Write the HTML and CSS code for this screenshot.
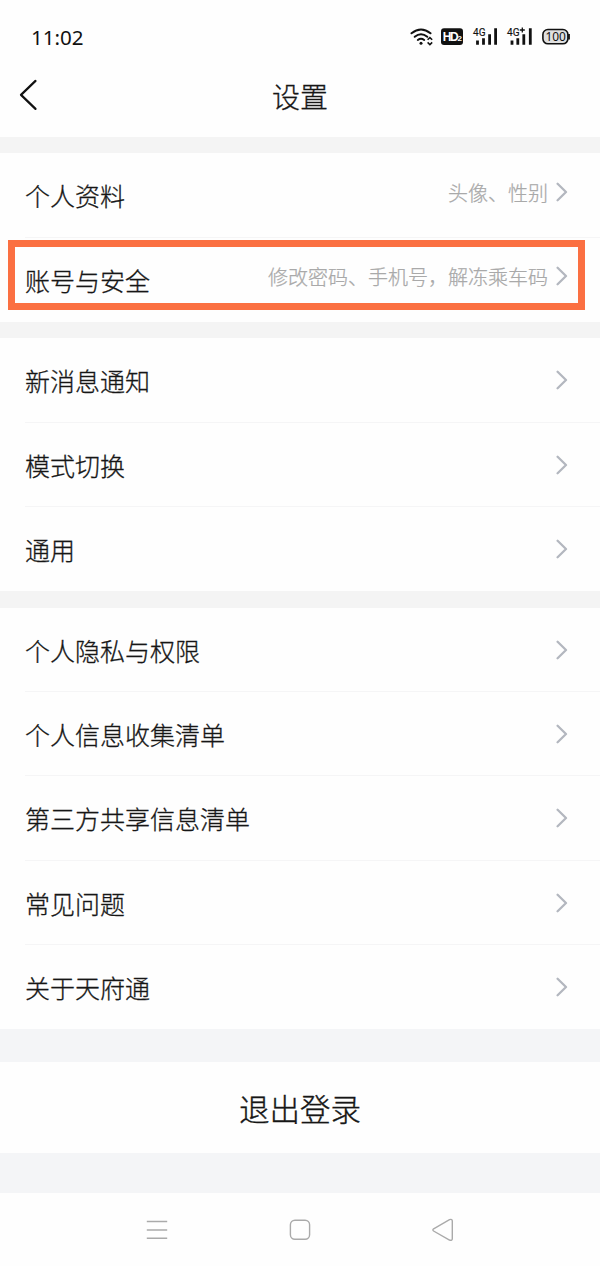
FILE: index.html
```html
<!DOCTYPE html>
<html lang="zh-CN">
<head>
<meta charset="utf-8">
<title>设置</title>
<link rel="stylesheet" href="styles.css">
</head>
<body>
<svg class="defs" width="0" height="0" aria-hidden="true">
  <symbol id="chevron" viewBox="0 0 12 20"><path d="M1.6 1.8 10 10 1.6 18.2" fill="none" stroke="#b3b7bf" stroke-width="2.3" stroke-linecap="round" stroke-linejoin="round"/></symbol>
</svg>
<main class="screen">
  <div class="status">
    <time class="clock">11:02</time>
    <svg class="signals" width="162" height="24" viewBox="0 0 162 24">
      <g fill="none" stroke="#111" stroke-width="2" stroke-linecap="round">
        <path d="M1.500 8.300Q11 .7 20.500 8.300"/>
        <path d="M4.700 11.800Q11 6.600 17.300 11.800"/>
        <path d="M7.800 15Q11 12.600 14.200 15"/>
      </g>
      <circle cx="11" cy="18.300" r="1.500" fill="#111"/>
      <path d="M17.600 14.800 19.900 12.600 22.200 14.800M17.600 17.400 19.900 19.600 22.200 17.400" fill="none" stroke="#111" stroke-width="1.500"/>
      <rect x="31" y="3.300" width="22" height="16.700" rx="3" fill="#111"/>
      <text x="32.800" y="16" class="hd">HD<tspan class="hd-num" dx=".3">2</tspan></text>
      <text x="63" y="11.400" class="net" textLength="12.500" lengthAdjust="spacingAndGlyphs">4G</text>
      <path d="M67.500 15.500v4.300M73.500 13.300v6.500M79.600 9.300v10.500M85.600 3.300v16.500" class="bars"/>
      <text x="97" y="11.400" class="net" textLength="12.500" lengthAdjust="spacingAndGlyphs">4G</text>
      <path d="M109.800 5h5M112.300 2.500v5" stroke="#111" stroke-width="1.300"/>
      <path d="M102 15.500v4.300M107.800 13.300v6.500M113.800 9.300v10.500M120.300 3.300v16.500" class="bars"/>
      <rect x="132.900" y="4.500" width="25" height="14.300" rx="5" fill="#e0e0e0" stroke="#111" stroke-width="1.600"/>
      <path d="M159 9v5.500" stroke="#111" stroke-width="1.800"/>
      <text x="135.400" y="16.200" class="level" textLength="20.500" lengthAdjust="spacingAndGlyphs">100</text>
    </svg>
  </div>
  <header class="header">
    <svg class="back" width="20" height="32" viewBox="0 0 20 32"><path d="M17.500 1.900 3 15.900 17.500 29.900" fill="none" stroke="#111" stroke-width="2.200" stroke-linecap="round" stroke-linejoin="round"/></svg>
    <h1 class="title">设置</h1>
  </header>
  <section class="group">
    <div class="row row-detail"><span class="label">个人资料</span><span class="detail">头像、性别</span><svg class="arrow"><use href="#chevron"/></svg></div>
    <div class="row row-detail"><span class="label">账号与安全</span><span class="detail">修改密码、手机号，解冻乘车码</span><svg class="arrow"><use href="#chevron"/></svg><div class="highlight"></div></div>
  </section>
  <section class="group">
    <div class="row"><span class="label">新消息通知</span><svg class="arrow"><use href="#chevron"/></svg></div>
    <div class="row"><span class="label">模式切换</span><svg class="arrow"><use href="#chevron"/></svg></div>
    <div class="row"><span class="label">通用</span><svg class="arrow"><use href="#chevron"/></svg></div>
  </section>
  <section class="group">
    <div class="row"><span class="label">个人隐私与权限</span><svg class="arrow"><use href="#chevron"/></svg></div>
    <div class="row"><span class="label">个人信息收集清单</span><svg class="arrow"><use href="#chevron"/></svg></div>
    <div class="row"><span class="label">第三方共享信息清单</span><svg class="arrow"><use href="#chevron"/></svg></div>
    <div class="row"><span class="label">常见问题</span><svg class="arrow"><use href="#chevron"/></svg></div>
    <div class="row"><span class="label">关于天府通</span><svg class="arrow"><use href="#chevron"/></svg></div>
  </section>
  <div class="footer">
    <div class="logout">退出登录</div>
  </div>
  <nav class="nav">
    <svg width="22" height="24" viewBox="0 0 22 24"><path d="M.8 3.500h20.400M.8 12h20.400M.8 20.300h20.400" stroke="#aaa" stroke-width="1.500"/></svg>
    <svg width="22" height="24" viewBox="0 0 22 24"><rect x="1.400" y="2.300" width="19.200" height="19" rx="4.500" fill="none" stroke="#aaa" stroke-width="1.400"/></svg>
    <svg width="22" height="24" viewBox="0 0 22 24"><path d="M1.600 10.800 17.500 1.700Q20.300.700 20.300 3V20.500Q20.300 23.200 17.500 22L1.600 13Q.200 11.900 1.600 10.800Z" fill="none" stroke="#aaa" stroke-width="1.400"/></svg>
  </nav>
</main>
</body>
</html>
```
FILE: styles.css
```css
* { box-sizing: border-box; }
body {
  margin: 0;
  background: #fefefe;
  color: #161616;
  font-family: "Noto Sans CJK SC", sans-serif;
  font-weight: 300;
}
.defs { display: block; }
.screen {
  width: 600px;
  height: 1266px;
  display: flex;
  flex-direction: column;
  overflow: hidden;
}
.status {
  height: 60px;
  flex: none;
  display: flex;
  justify-content: space-between;
  padding: 25px 28px 0 31px;
}
.clock {
  font: 400 20.6px/24px "Noto Sans", sans-serif;
  color: #111;
}
.hd { font: 700 12px "Liberation Sans", sans-serif; fill: #fff; letter-spacing: -1.5px; }
.hd-num { font-size: 8px; letter-spacing: 0; }
.net { font: 400 10.8px Roboto, sans-serif; fill: #111; stroke: #111; stroke-width: .15px; }
.level { font: 400 13px "Noto Sans", sans-serif; fill: #111; }
.bars { stroke: #111; stroke-width: 2.8; fill: none; }
.header {
  height: 76.8px;
  flex: none;
  display: grid;
  grid-template-columns: 40px 1fr 40px;
  padding: 0 18px;
}
.back { margin-top: 19px; }
.title {
  margin: 16px 0 0;
  font-size: 28px;
  line-height: 40px;
  font-weight: 300;
  text-align: center;
  -webkit-text-stroke: .3px currentColor;
}
.group {
  flex: none;
  padding-top: 16.4px;
  background: #f4f4f4;
}
.row {
  position: relative;
  height: 84.33px;
  display: flex;
  align-items: center;
  gap: 8px;
  padding: 0 32px 0 25px;
  background: #fefefe;
}
.row:not(:last-child) {
  background: linear-gradient(#f5f5f6, #f5f5f6) 25px 100% / 575px 1px no-repeat #fefefe;
}
.label {
  flex: 1;
  font-size: 25px;
  line-height: 36px;
  white-space: nowrap;
  -webkit-text-stroke: .3px currentColor;
}
.detail {
  font-size: 20px;
  line-height: 30px;
  color: #a9a9a9;
  padding-bottom: 4.5px;
  -webkit-text-stroke: .25px currentColor;
}
.arrow { width: 12px; height: 20px; flex: none; }
.row-detail .arrow { margin-bottom: 6.6px; }
.highlight {
  position: absolute;
  left: 8px;
  top: 2.5px;
  width: 577px;
  height: 70px;
  border: 7px solid #fb7042;
}
.footer {
  height: 163.3px;
  flex: none;
  padding: 33px 0 39px;
  background: #f4f5f7;
}
.logout {
  height: 91px;
  background: #fefefe;
  font-size: 30.5px;
  line-height: 93px;
  text-align: center;
  -webkit-text-stroke: .35px currentColor;
}
.nav {
  flex: 1;
  display: flex;
  justify-content: center;
  gap: 121px;
  padding-top: 25px;
}
```
